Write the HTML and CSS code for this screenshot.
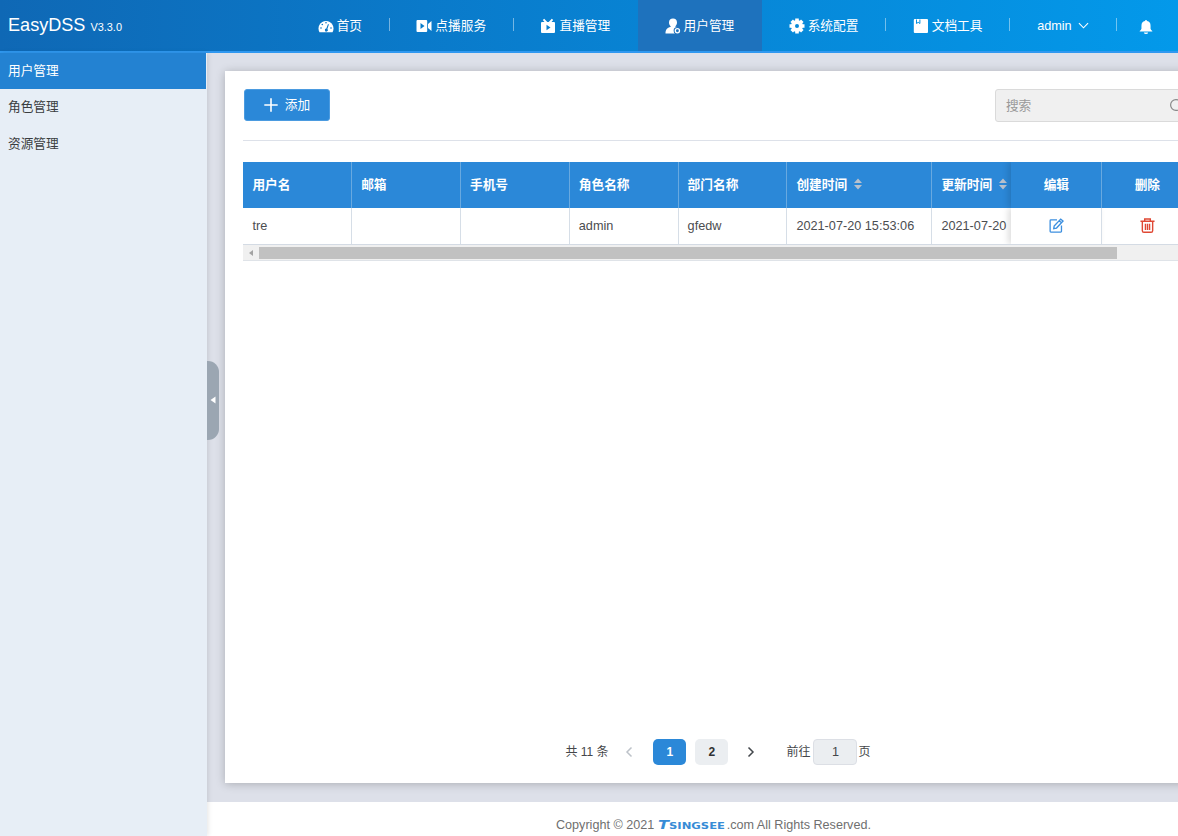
FILE: index.html
```html
<!DOCTYPE html>
<html lang="zh-CN">
<head>
<meta charset="utf-8">
<title>EasyDSS</title>
<link rel="stylesheet" href="styles.css">
</head>
<body>
<header class="header">
  <div class="brand">EasyDSS <small>V3.3.0</small></div>
  <nav class="nav">
    <a class="nav-item nav-home"><svg class="icon" viewBox="0 0 16 16"><path fill="#fff" d="M1.500 14.200A7.500 7.500 0 1 1 14.500 14.200Z"/><g fill="#0b77c6"><circle cx="3" cy="10" r=".8"/><circle cx="4.300" cy="6.500" r=".8"/><circle cx="8" cy="4.700" r=".8"/><circle cx="13" cy="10" r=".8"/><path d="m10 6 .9.400-1.500 4.600a1.500 1.500 0 1 1-1.100-.4z"/></g></svg>首页</a>
    <a class="nav-item"><svg class="icon" viewBox="0 0 16 16"><path fill="#fff" d="M1.500 2h8.700q1 0 1 1v10q0 1-1 1H1.500q-1 0-1-1V3q0-1 1-1zM12 6l3.500-3v10L12 10z"/><path fill="#087ccb" d="m4.500 5 4 3-4 3z"/></svg>点播服务</a>
    <a class="nav-item"><svg class="icon" viewBox="0 0 16 16"><path fill="#fff" d="M2 4h2.500L2.800 2l1.400-1.200L7.300 4h1.400l3.100-3.200L13.200 2l-1.700 2H14q1 0 1 1v9q0 1-1 1H2q-1 0-1-1V5q0-1 1-1z"/><path fill="#087fd0" d="m6.500 6.700 4 2.800-4 2.800z"/></svg>直播管理</a>
    <a class="nav-item active"><svg class="icon" viewBox="0 0 16 16"><path fill="#fff" d="M8 .5c2.500 0 4 1.600 4 4 0 1.800-.7 3.200-2 4 1.500.5 3 .8 4 2V15.500H.5c0-3.500 1-5.200 5.500-7C4.700 7.700 4 6.300 4 4.500c0-2.400 1.500-4 4-4z"/><circle cx="12.300" cy="12.700" r="3.700" fill="#1e72bd"/><circle cx="12.400" cy="12.700" r="2.100" fill="none" stroke="#fff" stroke-width="1.300"/></svg>用户管理</a>
    <a class="nav-item"><svg class="icon" viewBox="0 0 16 16"><g fill="none" stroke="#fff"><circle cx="8" cy="8" r="4" stroke-width="4"/><path stroke-width="3.600" d="M8 .5v3M8 12.500v3M.5 8h3M12.500 8h3M2.700 2.700l2 2M11.300 11.300l2 2M2.700 13.300l2-2M11.300 4.700l2-2"/></g></svg>系统配置</a>
    <a class="nav-item"><svg class="icon" viewBox="0 0 16 16"><rect x=".8" y="1" width="14.200" height="14" rx="1" fill="#fff"/><path fill="none" stroke="#0590e0" d="M3.500 1.500v4l1.700-1.200 1.700 1.200v-4"/></svg>文档工具</a>
    <a class="nav-item nav-user">admin<svg class="caret" viewBox="0 0 12 12"><path fill="none" stroke="#fff" stroke-width="1.200" d="m1 3.500 5 5 5-5"/></svg></a>
    <a class="nav-item nav-bell"><svg class="bell" viewBox="0 0 16 18"><path fill="#fff" d="M8 1q1 0 1.200 1.200 4 .8 4 5.300v3.500q.5 1.700 2 2.500v.7H.8v-.7q1.500-.8 2-2.500V7.500q0-4.500 4-5.300Q7 1 8 1zM5.500 15.200h5Q10.200 17 8 17t-2.500-1.800z"/></svg></a>
  </nav>
</header>
<div class="body">
  <aside class="sidebar">
    <a class="side-item current">用户管理</a>
    <a class="side-item">角色管理</a>
    <a class="side-item">资源管理</a>
    <div class="collapse"><svg viewBox="0 0 6 8"><path fill="#fff" d="M5.500.5v7L.5 4z"/></svg></div>
  </aside>
  <div class="main">
    <main class="content">
      <section class="card">
        <div class="toolbar">
          <button class="add"><svg viewBox="0 0 14 14"><path fill="none" stroke="#fff" stroke-width="1.600" d="M7 .3v13.400M.3 7h13.400"/></svg>添加</button>
          <div class="search"><span>搜索</span><svg viewBox="0 0 14 14"><circle cx="6" cy="6" r="5.400"/><path d="m10 10 3.500 3.500"/></svg></div>
        </div>
        <div class="table">
          <div class="row head">
            <div class="cell">用户名</div><div class="cell">邮箱</div><div class="cell">手机号</div><div class="cell">角色名称</div><div class="cell">部门名称</div>
            <div class="cell time">创建时间<svg class="sort" viewBox="0 0 8 12"><path d="m0 5 4-4.500L8 5zM0 7h8l-4 4.500z"/></svg></div>
            <div class="cell cut">更新时间<svg class="sort" viewBox="0 0 8 12"><path d="m0 5 4-4.500L8 5zM0 7h8l-4 4.500z"/></svg></div>
            <div class="cell action fixed">编辑</div><div class="cell action">删除</div>
          </div>
          <div class="row data">
            <div class="cell">tre</div><div class="cell"></div><div class="cell"></div><div class="cell">admin</div><div class="cell">gfedw</div>
            <div class="cell time">2021-07-20 15:53:06</div>
            <div class="cell cut">2021-07-20</div>
            <div class="cell action fixed"><svg class="op" viewBox="0 0 16 16" fill="none" stroke="#3c8fdf" stroke-width="1.400"><path d="M8.500 2H2q-.8 0-.8.800v11.400q0 .8.800.800h10.500q.8 0 .8-.8V8"/><path d="m5.500 8.500 7-7.300 2.500 2-7 7.500-3 .6zM10.800 3l2.500 2"/></svg></div>
            <div class="cell action"><svg class="op" viewBox="0 0 16 16" fill="none" stroke="#df4834" stroke-width="1.500"><path d="M.5 3.500h15M5 3.300V1h6v2.300M2.500 3.500v10q0 1.700 1.700 1.700h7.600q1.700 0 1.700-1.700v-10M5.800 6v6.700M8 6v6.700M10.200 6v6.700"/></svg></div>
          </div>
          <div class="scrollbar"><svg viewBox="0 0 4 6"><path fill="#a3a3a3" d="M4 0v6L0 3z"/></svg><div class="thumb"></div></div>
        </div>
        <div class="pager">
          <span class="total">共 11 条</span>
          <svg class="arrow off" viewBox="0 0 8 12"><path d="M6.500 1.500 2 6l4.500 4.500"/></svg>
          <span class="page on">1</span><span class="page">2</span>
          <svg class="arrow" viewBox="0 0 8 12"><path d="M1.500 1.500 6 6l-4.500 4.500"/></svg>
          <span class="goto">前往</span><span class="jump">1</span><span>页</span>
        </div>
      </section>
    </main>
    <footer class="footer">Copyright © 2021 <svg class="wordmark" viewBox="0 0 68 12"><text x="0" y="10" font-size="12" font-style="italic" textLength="11" lengthAdjust="spacingAndGlyphs">T</text><text x="11" y="10" font-size="9.500" textLength="56" lengthAdjust="spacingAndGlyphs">SINGSEE</text></svg>.com All Rights Reserved.</footer>
  </div>
</div>
</body>
</html>
```

FILE: styles.css
```css
* { box-sizing: border-box; }
body {
  margin: 0;
  height: 836px;
  overflow: hidden;
  display: flex;
  flex-direction: column;
  font: 12.7px/18px "Liberation Sans", "Noto Sans CJK SC", sans-serif;
  color: #4b4d50;
}
svg { display: block; flex: none; }
.header {
  flex: none;
  height: 53px;
  display: flex;
  color: #fff;
  border-bottom: 2px solid #2f98f0;
  background: linear-gradient(90deg, #0f68b5, #0a7aca 36%, #0399ea);
}
.brand { width: 291px; padding: 13px 0 0 8px; font-size: 18.100px; line-height: 25px; flex: none; }
.brand small { font-size: 10.900px; }
.nav { display: flex; flex: none; }
.nav-item {
  width: 124.100px;
  display: flex;
  align-items: center;
  justify-content: center;
  padding-right: 1px;
  background: linear-gradient(#ffffff70, #ffffff70) right 18px / 1px 13px no-repeat;
}
.nav-home { width: 98.700px; }
.nav-user { width: 106.500px; }
.nav-bell { width: 60px; background: none; }
.nav-item.active { background: #1e72bd; }
.nav-item:has(+ .active) { background: none; }
.icon { width: 16px; height: 16px; margin-right: 3px; }
.caret { width: 11px; height: 11px; margin-left: 6px; }
.bell { width: 14px; height: 16px; margin: 2px 1px 0 0; }
.body { flex: 1; display: flex; min-height: 0; }
.sidebar { position: relative; width: 207px; flex: none; background: #e7eef6; color: #3a3d40; z-index: 1; box-shadow: 1px 0 5px #0000001c; }
.side-item { display: block; height: 36.300px; padding: 9px 8px; }
.side-item.current { background: #2382d2; color: #fff; margin-right: 1px; }
.collapse {
  position: absolute;
  left: 207px;
  top: 308px;
  width: 12px;
  height: 79px;
  border-radius: 0 11px 11px 0;
  background: #9ba6b2;
  display: flex;
  align-items: center;
  justify-content: center;
}
.collapse svg { width: 6px; height: 8px; margin-bottom: 1px; }
.main { flex: none; width: 1010px; display: flex; flex-direction: column; }
.content { height: 749px; flex: none; padding: 18px 0 19px 18.400px; background: #dde0e9; }
.card { height: 712px; padding: 18px 0 18px 18px; background: #fff; box-shadow: 0 1px 9px #0000003b; display: flex; flex-direction: column; }
.toolbar { display: flex; justify-content: space-between; height: 52px; border-bottom: 1px solid #dde1e9; width: 958px; flex: none; }
.add {
  width: 86px;
  height: 32px;
  margin: 0 0 0 .6px;
  padding: 0;
  border: 1px solid #4b9be0;
  border-radius: 3px;
  background: #2b88d8;
  color: #fff;
  font: inherit;
  display: flex;
  align-items: center;
  justify-content: center;
  gap: 7px;
}
.add svg { width: 14px; height: 14px; }
.search {
  width: 206.500px;
  height: 33px;
  padding: 0 16px 0 10px;
  border: 1px solid #dadada;
  border-radius: 3px;
  background: #f0f0f0;
  color: #999;
  display: flex;
  justify-content: space-between;
  align-items: center;
}
.search svg { width: 14px; height: 14px; fill: none; stroke: #888; stroke-width: 1.200; }
.table { width: 958px; margin-top: 21px; flex: none; }
.row { display: flex; overflow: hidden; }
.head { height: 46px; background: #2b88d8; color: #fff; font-weight: bold; }
.data { height: 37px; border-bottom: 1px solid #d4dbe4; }
.cell {
  width: 108.800px;
  flex: none;
  padding-left: 9px;
  display: flex;
  align-items: center;
  border-right: 1px solid #d6dee7;
  white-space: nowrap;
}
.head .cell { border-color: #68a9e0; }
.time { width: 145px; }
.row .cut { width: 79px; border: 0; }
.action { width: 91px; padding: 0; justify-content: center; }
.fixed { box-shadow: -3px 0 6px #00000020; }
.sort { width: 8px; height: 12px; margin: -2px 0 0 7px; fill: #b8c1cd; }
.op { width: 15px; height: 15px; margin-bottom: 2px; }
.scrollbar { height: 16px; padding: 2px 0 2px; background: #f0f0f0; border-bottom: 1px solid #dfe3e8; display: flex; align-items: center; }
.scrollbar svg { width: 4px; height: 6px; margin: 0 6px 0 6px; }
.thumb { width: 858px; height: 12px; background: #c1c1c1; }
.pager { display: flex; align-items: center; margin: auto 0 0 322px; height: 26px; font-size: 12px; color: #45474a; }
.total { width: 60px; white-space: nowrap; }
.arrow { width: 8px; height: 12px; fill: none; stroke: #43474c; stroke-width: 1.500; }
.arrow.off { stroke: #bdc2c9; margin-right: 20px; }
.page { width: 33px; height: 26px; line-height: 26px; margin-right: 9px; border-radius: 5px; background: #ebeef1; text-align: center; font-weight: bold; color: #303133; }
.page + .arrow { margin-left: 10px; }
.page.on { background: #2b88d8; color: #fff; }
.goto { margin-left: 31px; }
.jump { width: 44px; height: 26px; line-height: 24px; margin: 0 1px 0 3px; border: 1px solid #dcdfe5; border-radius: 4px; background: #ebeef1; text-align: center; font-size: 12.700px; }
.footer { flex: 1; background: #fff; color: #6f6f6f; padding: 14px 0 0 349px; display: flex; white-space: pre; font-size: 12.600px; }
.wordmark { width: 68px; height: 12px; margin: 3px 1px 0 0; font-family: "DejaVu Sans", sans-serif; font-weight: bold; fill: #378cd6; }
```
